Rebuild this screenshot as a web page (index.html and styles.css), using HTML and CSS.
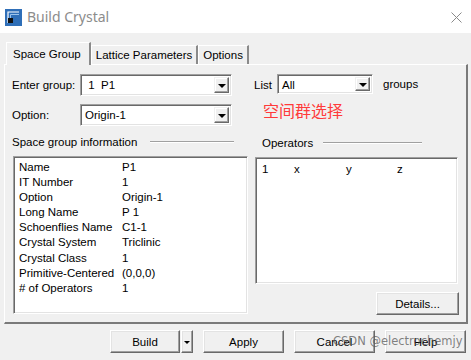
FILE: index.html
```html
<!DOCTYPE html>
<html lang="en">
<head>
  <meta charset="UTF-8">
  <title>Build Crystal</title>
  <link rel="stylesheet" href="styles.css">
</head>
<body>
  <div class="window">
    <!-- 标题栏 -->
    <div class="titlebar">
      <svg class="app-icon" width="17" height="17" viewBox="0 0 17 17">
        <rect x="0" y="0" width="17" height="17" fill="#2f6fb8"/>
        <path d="M3 14 V3 H14" fill="none" stroke="#ffffff" stroke-width="1.2"/>
        <path d="M5.5 14 V5.5 H14" fill="none" stroke="#9cc4ec" stroke-width="1"/>
        <rect x="3" y="9" width="5" height="5" fill="#111"/>
      </svg>
      <span class="title">Build Crystal</span>
      <svg class="close" width="11" height="11" viewBox="0 0 11 11">
        <path d="M0.5 0.5 L10.5 10.5 M10.5 0.5 L0.5 10.5" stroke="#8a8a8a" stroke-width="1"/>
      </svg>
    </div>

    <!-- 选项卡 -->
    <div class="tabs">
      <div class="tab active">Space Group</div>
      <div class="tab">Lattice Parameters</div>
      <div class="tab">Options</div>
    </div>

    <div class="panel">
      <div class="col-left">
        <div class="row">
          <span class="label">Enter group:</span>
          <div class="combo wide"><span class="combo-text">&nbsp;1&nbsp;&nbsp;P1</span><span class="drop"></span></div>
        </div>
        <div class="row row-gap">
          <span class="label">Option:</span>
          <div class="combo wide"><span class="combo-text">Origin-1</span><span class="drop"></span></div>
        </div>
        <div class="group-title">Space group information</div>
        <div class="listbox info">
          <div class="info-row"><span>Name</span><span>P1</span></div>
          <div class="info-row"><span>IT Number</span><span>1</span></div>
          <div class="info-row"><span>Option</span><span>Origin-1</span></div>
          <div class="info-row"><span>Long Name</span><span>P 1</span></div>
          <div class="info-row"><span>Schoenflies Name</span><span>C1-1</span></div>
          <div class="info-row"><span>Crystal System</span><span>Triclinic</span></div>
          <div class="info-row"><span>Crystal Class</span><span>1</span></div>
          <div class="info-row"><span>Primitive-Centered</span><span>(0,0,0)</span></div>
          <div class="info-row"><span>&#35; of Operators</span><span>1</span></div>
        </div>
      </div>

      <div class="col-right">
        <div class="row">
          <span class="label-list">List</span>
          <div class="combo small"><span class="combo-text">All</span><span class="drop"></span></div>
          <span class="groups">groups</span>
        </div>
        <div class="note">空间群选择</div>
        <div class="group-title ops-title">Operators</div>
        <div class="listbox ops">
          <div class="op-row"><span>1</span><span>x</span><span>y</span><span>z</span></div>
        </div>
        <div class="details-row">
          <button type="button" class="btn details">Details...</button>
        </div>
      </div>
    </div>

    <!-- 底部按钮 -->
    <div class="footer">
      <div class="split">
        <button type="button" class="btn build">Build</button>
        <button type="button" class="btn build-drop"><span class="tri"></span></button>
      </div>
      <button type="button" class="btn">Apply</button>
      <button type="button" class="btn">Cancel</button>
      <button type="button" class="btn">Help</button>
      <span class="watermark">CSDN @electrochemjy</span>
    </div>
  </div>
</body>
</html>
```

FILE: styles.css
```css
body {
  margin: 0;
  padding: 0;
  background-color: #f0f0f0;
  font-family: "Liberation Sans", Arial, sans-serif;
  font-size: 11.5px;
  color: #000;
}
.window {
  position: relative;
  width: 471px;
  height: 360px;
  overflow: hidden;
}
.titlebar {
  height: 33px;
  background: #fff;
  display: flex;
  align-items: center;
  padding-left: 5px;
  box-sizing: border-box;
}
.app-icon {
  margin-top: 1px;
}
.title {
  margin-left: 5px;
  font-family: "Noto Sans", "Open Sans", sans-serif;
  font-size: 14px;
  color: #8c8c8c;
}
.close {
  margin-left: auto;
  margin-right: 9px;
  margin-top: 1px;
}
.tabs {
  display: flex;
  align-items: flex-end;
  height: 31px;
  padding-left: 6px;
  box-sizing: border-box;
}
.tab {
  padding: 0 4px;
  border-top: 1px solid #fff;
  border-left: 1px solid #fff;
  border-right: 2px solid #8a8a8a;
  box-sizing: border-box;
  height: 19px;
  line-height: 18px;
}
.tab.active {
  height: 23px;
  line-height: 22px;
  padding: 0 8px 0 6px;
  margin-bottom: -1px;
  background: #f0f0f0;
  position: relative;
  z-index: 1;
}
.panel {
  margin-left: 4px;
  width: 464px;
  height: 260px;
  border-top: 1px solid #fff;
  border-left: 1px solid #fff;
  border-right: 2px solid #7a7a7a;
  border-bottom: 2px solid #7a7a7a;
  box-sizing: border-box;
  display: flex;
  gap: 6px;
  padding: 9px 0 0 7px;
}
.col-left {
  width: 236px;
  display: flex;
  flex-direction: column;
}
.col-right {
  width: 206px;
  display: flex;
  flex-direction: column;
}
.row {
  display: flex;
  align-items: center;
  height: 22px;
}
.row-gap {
  margin-top: 8px;
}
.label {
  width: 68px;
}
.combo {
  display: flex;
  align-items: stretch;
  background: #fff;
  border: 1px solid;
  border-color: #a0a0a0 #fff #fff #a0a0a0;
  box-shadow: inset 1px 1px #696969, inset -1px -1px #e3e3e3;
  box-sizing: border-box;
  padding: 2px;
}
.combo.wide {
  width: 152px;
  height: 22px;
}
.combo.small {
  width: 96px;
  height: 20px;
  margin-top: -2px;
}
.combo-text {
  flex: 1;
  line-height: 16px;
  padding-left: 2px;
}
.drop {
  width: 15px;
  background: #f0f0f0;
  border: 1px solid;
  border-color: #f0f0f0 #696969 #696969 #f0f0f0;
  box-shadow: inset -1px -1px #a0a0a0, inset 1px 1px #fff;
  box-sizing: border-box;
  display: flex;
  align-items: center;
  justify-content: center;
}
.drop::after,
.tri {
  content: "";
  display: block;
  width: 0;
  height: 0;
  border-left: 4px solid transparent;
  border-right: 4px solid transparent;
  border-top: 4px solid #000;
  margin-top: 1px;
}
.label-list {
  width: 23px;
}
.groups {
  margin-left: 10px;
  margin-top: -2px;
}
.note {
  height: 28px;
  margin-top: 1px;
  padding-left: 9px;
  font-family: "Noto Sans CJK SC", sans-serif;
  font-size: 16px;
  line-height: 26px;
  color: #ff3a3a;
}
.group-title {
  display: flex;
  align-items: center;
  height: 16px;
  margin-top: 8px;
}
.group-title::after {
  content: "";
  width: 84px;
  margin-left: 13px;
  border-top: 1px solid #a0a0a0;
  border-bottom: 1px solid #fff;
}
.ops-title {
  padding-left: 8px;
  margin-top: 10px;
}
.ops-title::after {
  width: 99px;
  margin-left: 10px;
}
.listbox {
  margin-top: 6px;
  margin-left: 1px;
  background: #fff;
  border: 1px solid;
  border-color: #a0a0a0 #fff #fff #a0a0a0;
  box-shadow: inset 1px 1px #696969, inset -1px -1px #e3e3e3;
  box-sizing: border-box;
}
.info {
  width: 235px;
  height: 158px;
  padding: 3px 0 0 5px;
}
.info-row {
  display: grid;
  grid-template-columns: 103px 1fr;
  height: 15.1px;
  line-height: 15px;
}
.ops {
  width: 203px;
  height: 127px;
  margin-top: 6px;
  padding: 4px 0 0 6px;
}
.op-row {
  display: grid;
  grid-template-columns: 32px 52px 51px 20px;
  line-height: 15px;
}
.details-row {
  display: flex;
  justify-content: flex-end;
  margin-top: 8px;
  padding-right: 1px;
}
.btn {
  font-family: "Liberation Sans", Arial, sans-serif;
  font-size: 11.5px;
  color: #000;
  background: #f0f0f0;
  border: 1px solid;
  border-color: #fff #696969 #696969 #fff;
  box-shadow: inset -1px -1px #a0a0a0, inset 1px 1px #e3e3e3;
  box-sizing: border-box;
  width: 81px;
  height: 23px;
  padding: 0;
  margin: 0;
}
.details {
  width: 83px;
}
.footer {
  display: flex;
  align-items: center;
  gap: 10px;
  padding-left: 110px;
  margin-top: 6px;
}
.split {
  display: flex;
  gap: 1px;
}
.build {
  width: 70px;
}
.build-drop {
  width: 12px;
  display: flex;
  align-items: center;
  justify-content: center;
}
.tri {
  border-left-width: 3px;
  border-right-width: 3px;
  border-top-width: 3px;
}
.watermark {
  position: absolute;
  left: 333px;
  top: 334px;
  font-family: "DejaVu Sans", sans-serif;
  font-size: 11.5px;
  color: rgba(90, 90, 90, 0.75);
}
```
